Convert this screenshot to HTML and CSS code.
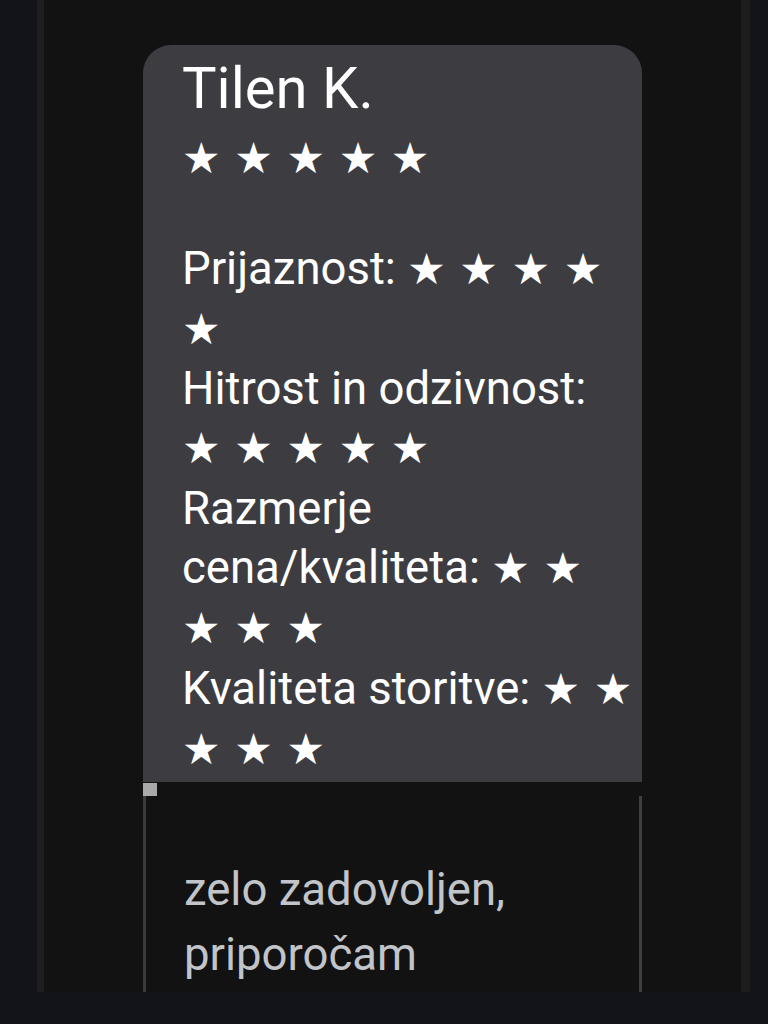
FILE: index.html
```html
<!DOCTYPE html>
<html lang="sl">
<head>
  <meta charset="UTF-8">
  <meta name="viewport" content="width=device-width, initial-scale=1.0">
  <title>Ocena - Tilen K.</title>
  <link rel="stylesheet" href="styles.css">
</head>
<body>
  <div class="screen">
    <div class="frame">
      <!-- Review card -->
      <section class="review">
        <h2 class="review-name">Tilen K.</h2>
        <p class="review-total"><span class="stars">★ ★ ★ ★ ★</span></p>

        <ul class="review-ratings">
          <li>Prijaznost: <span class="stars">★ ★ ★ ★ ★</span></li>
          <li>Hitrost in odzivnost: <span class="stars">★ ★ ★ ★ ★</span></li>
          <li>Razmerje cena/kvaliteta: <span class="stars">★ ★<br>★ ★ ★</span></li>
          <li>Kvaliteta storitve: <span class="stars">★ ★ ★ ★ ★</span></li>
        </ul>
      </section>

      <!-- Review comment -->
      <div class="comment-handle"></div>
      <div class="comment">
        <p>zelo zadovoljen, priporočam</p>
      </div>
    </div>
  </div>
</body>
</html>
```

FILE: styles.css
```css
/* General Styles */
* {
  margin: 0;
  padding: 0;
  box-sizing: border-box;
}

body {
  font-family: Roboto, "Noto Sans", Arial, sans-serif;
  background-color: #12141a;
  color: #fff;
  height: 1024px;
  overflow: hidden;
}

/* Screen frame */
.screen {
  height: 992px;
  padding: 0 18px 0 37px;
  background-color: #131419;
}

.frame {
  height: 100%;
  overflow: hidden;
  background-color: #121212;
  border-left: 7px solid #1e1e1f;
  border-right: 9px solid #1d1d1e;
  padding-top: 45px;
}

/* Review Card */
.review {
  width: 499px;
  margin-left: 99px;
  padding: 14px 9px 3px 39px;
  background-color: #3d3c41;
  border-radius: 28px 28px 0 0;
  font-size: 45.5px;
  line-height: 59.3px;
}

.review-name {
  font-size: 58px;
  font-weight: 400;
  line-height: 59.3px;
}

.review-total {
  margin: 10px 0 50px;
}

.review-ratings {
  list-style: none;
}

.stars {
  font-family: "DejaVu Sans", sans-serif;
  font-size: 43px;
}

/* Comment */
.comment-handle {
  width: 14px;
  height: 13px;
  margin: 1px 0 0 99px;
  background-color: #a9a9a9;
}

.comment {
  width: 499px;
  height: 300px;
  margin-left: 99px;
  padding: 61px 20px 0 38px;
  border-left: 3px solid #3b3b3b;
  border-right: 3px solid #3f3f3f;
  color: #c1c4c9;
  font-size: 45.5px;
  line-height: 65px;
}
```
